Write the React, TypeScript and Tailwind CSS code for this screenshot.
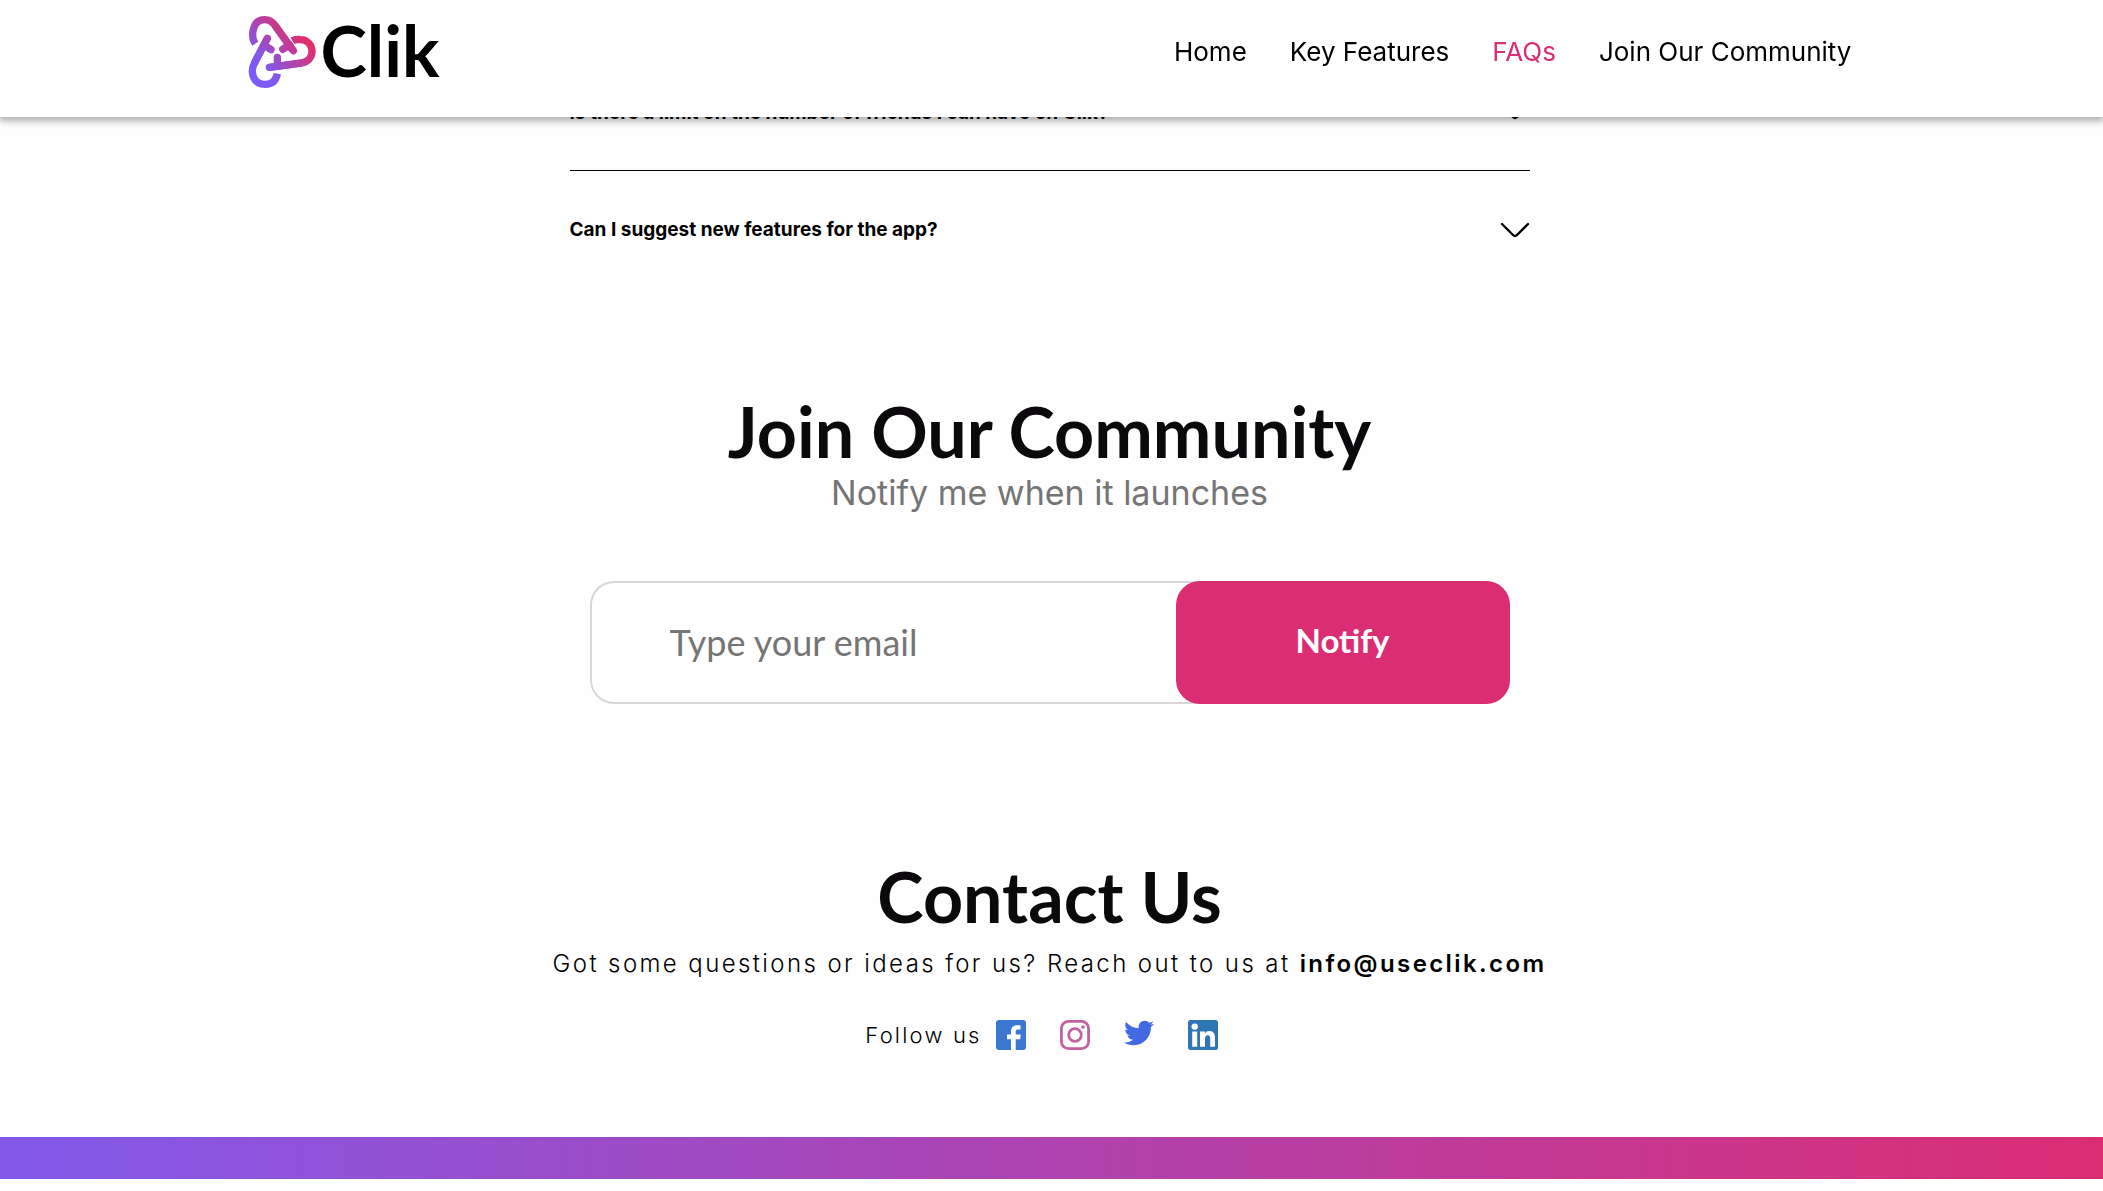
import { useState } from 'react';
import { FaTwitter } from 'react-icons/fa';

const navLinks = [
  { name: 'Home', href: '#home' },
  { name: 'Key Features', href: '#features' },
  { name: 'FAQs', href: '#faqs' },
  { name: 'Join Our Community', href: '#community' },
];

const questions = [
  'Is there a limit on the number of friends I can have on Clik?',
  'Can I suggest new features for the app?',
];

function LogoMark() {
  return (
    <svg viewBox="55 45 207 222" className="h-[74px] w-[69px]" fill="none" aria-hidden="true">
      <defs>
        <linearGradient id="mark" gradientUnits="userSpaceOnUse" x1="80" y1="220" x2="215" y2="105">
          <stop offset="0" stopColor="#7b5cfa" />
          <stop offset="0.25" stopColor="#8656e6" />
          <stop offset="1" stopColor="#e22e6b" />
        </linearGradient>
      </defs>
      <g stroke="url(#mark)" strokeWidth="22">
        <path d="M77 131C63 112 66 59 105 59C120 59 129 66 138 79L190 152" />
        <path d="M188 122C195 118 203 118 212 119C232 119 247 134 247 154C247 173 234 186 215 189L120 202" />
        <path d="M113 115L76 186C58 218 72 253 107 253C127 253 139 243 143 221" />
        <path d="M138 79L191 152M180 134L159 148M215 189L119 202M143 197V172M113 115L76 186M104 136L124 149" strokeLinecap="round" />
      </g>
    </svg>
  );
}

function Navbar() {
  return (
    <header className="fixed inset-x-0 top-0 z-50 bg-white pr-1 shadow-[0_3px_7px_1px_rgba(0,0,0,0.32)]">
      <div className="mx-auto flex h-[117px] max-w-[1604px] items-start justify-between">
        <a href="#home" className="flex items-start gap-1 pt-[15px]">
          <LogoMark />
          <span className="font-['Lato',sans-serif] text-[70px] leading-[70px] font-bold text-black">Clik</span>
        </a>
        <nav className="flex gap-[43px] pt-8">
          {navLinks.map((link) => (
            <a
              key={link.name}
              href={link.href}
              className={`text-[26px] leading-10 ${link.name === 'FAQs' ? 'text-[#db2d74]' : 'text-black'}`}
            >
              {link.name}
            </a>
          ))}
        </nav>
      </div>
    </header>
  );
}

function Faqs() {
  const [open, setOpen] = useState<number | null>(null);

  return (
    <section id="faqs" className="mx-auto max-w-[960px] divide-y divide-black">
      {questions.map((question, index) => (
        <button
          key={question}
          type="button"
          aria-expanded={open === index}
          onClick={() => setOpen(open === index ? null : index)}
          className="flex h-[117px] w-full items-center justify-between pt-0.5 text-left text-[19px] font-bold text-black"
        >
          {question}
          <svg viewBox="0 0 30 18" className="h-[18px] w-[30px]" fill="none" aria-hidden="true">
            <path d="M2 2L13 13Q15 15 17 13L28 2" stroke="#000" strokeWidth="2.4" strokeLinecap="round" />
          </svg>
        </button>
      ))}
    </section>
  );
}

function Community() {
  return (
    <section id="community" className="mx-auto max-w-[920px] pt-[103px] text-center">
      <h2 className="font-['Lato',sans-serif] text-[70px] leading-20 font-bold text-[#0b090c]">Join Our Community</h2>
      <p className="mt-0.5 text-[34px] leading-10 text-[#757575]">Notify me when it launches</p>
      <form
        className="mt-[68px] flex h-[123px] rounded-3xl bg-white font-['Lato',sans-serif] ring-2 ring-[#d8d6da] ring-inset"
        onSubmit={(e) => e.preventDefault()}
      >
        <input
          type="email"
          aria-label="Email"
          placeholder="Type your email"
          className="min-w-0 flex-1 bg-transparent px-20 pb-0.5 text-4xl text-black outline-none placeholder:text-[#757575]"
        />
        <button type="submit" className="w-[334px] rounded-3xl bg-[#db2d74] pb-1 text-[33px] font-bold text-white">
          Notify
        </button>
      </form>
    </section>
  );
}

function Contact() {
  return (
    <section id="contact" className="pt-[152px] pb-[85px] text-center text-black">
      <h2 className="font-['Lato',sans-serif] text-[70px] leading-20 font-bold text-[#0b090c]">Contact Us</h2>
      <p className="mt-2 text-2xl leading-10 font-light tracking-widest">
        Got some questions or ideas for us? Reach out to us at{' '}
        <a href="mailto:info@useclik.com" className="font-semibold">
          info@useclik.com
        </a>
      </p>
      <div className="mt-[34px] flex items-center justify-center gap-3.5 pr-4">
        <span className="text-[22px] leading-8 font-light tracking-widest">Follow us</span>
        <div className="flex items-center gap-[34px]">
          <a href="#facebook" aria-label="Facebook">
            <svg viewBox="0 0 30 30" className="size-[30px]">
              <rect width="30" height="30" rx="3" fill="#3b76d0" />
              <path
                fill="#fff"
                d="M15 30V19.3H11V14.6H15V11.5C15 7.3 17.5 5.2 21 5.2H24.5V9.5H22.2C20.3 9.5 19.7 10.3 19.7 12V14.6H24.8L24.2 19.3H19.7V30Z"
              />
            </svg>
          </a>
          <a href="#instagram" aria-label="Instagram">
            <svg viewBox="0 0 30 30" className="size-[30px]" fill="none" stroke="#c2629f" strokeWidth="2.8">
              <rect x="1.4" y="1.4" width="27.2" height="27.2" rx="7" />
              <circle cx="15" cy="15" r="6.3" />
              <circle cx="23" cy="7" r="1.8" fill="#c2629f" stroke="none" />
            </svg>
          </a>
          <a href="#twitter" aria-label="Twitter" className="pb-1">
            <FaTwitter className="size-[30px] text-[#4169e1]" />
          </a>
          <a href="#linkedin" aria-label="LinkedIn">
            <svg viewBox="0 0 30 30" className="size-[30px]">
              <rect width="30" height="30" rx="2.5" fill="#2f76b5" />
              <g fill="#fff">
                <circle cx="6.7" cy="6.6" r="3.2" />
                <path d="M4.2 11.4H9.2V26.7H4.2ZM12 11.4H16.8V13.5C17.8 11.8 19.4 11 21.4 11C25.8 11 27 13.9 27 18V26.7H22.2V18.8C22.2 16.7 21.8 15.2 19.8 15.2C17.7 15.2 17 16.7 17 18.8V26.7H12Z" />
              </g>
            </svg>
          </a>
        </div>
      </div>
    </section>
  );
}

export default function App() {
  return (
    <div className="min-h-screen bg-[#fefefe] font-['Inter',sans-serif]">
      <Navbar />
      <main className="pt-[54px] pr-1">
        <Faqs />
        <Community />
        <Contact />
      </main>
      <footer className="h-[42px] bg-linear-to-r/srgb from-[#8259ea] to-[#db2d74]" />
    </div>
  );
}
